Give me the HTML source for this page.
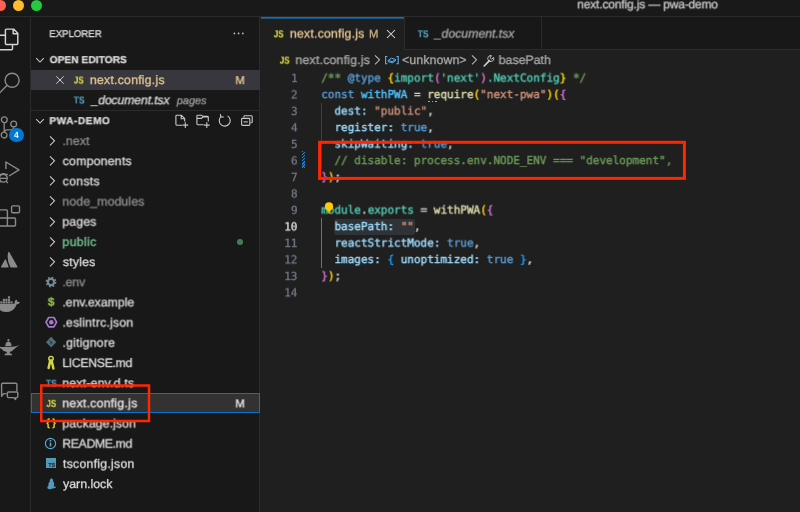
<!DOCTYPE html>
<html lang="en"><head><meta charset="utf-8"><title>next.config.js — pwa-demo</title>
<style>
*{box-sizing:border-box;margin:0;padding:0}
html,body{width:800px;height:512px;overflow:hidden;background:#1f1f1f}
body{position:relative;font-family:"Liberation Sans",sans-serif;color:#ccc;-webkit-font-smoothing:antialiased}
.abs{position:absolute}
.t{position:absolute;white-space:pre;line-height:1;transform-origin:0 0;will-change:transform;text-rendering:geometricPrecision}
#title{left:0;top:0;width:800px;height:17px;background:#191919;border-bottom:1px solid #2b2b2b}
#act{left:0;top:17px;width:31px;height:495px;background:#181818;border-right:1px solid #2b2b2b}
#side{left:31px;top:17px;width:229px;height:495px;background:#181818;border-right:1px solid #2b2b2b}
#tabs{left:260px;top:17px;width:540px;height:33px;background:#181818;border-bottom:1px solid #2b2b2b}
#tab1{left:260px;top:17px;width:145px;height:33px;background:#1f1f1f;border-right:1px solid #2b2b2b}
#tab1:before{content:'';position:absolute;left:1px;top:0;width:143px;height:1px;background:#0a74cc}
#tab1:after{content:'';position:absolute;left:1px;top:1px;width:143px;height:1px;background:#0a74cc;opacity:.6}
#tab2{left:405px;top:17px;width:137px;height:33px;background:#181818;border-right:1px solid #2b2b2b;border-bottom:1px solid #2b2b2b}
.mono{font-family:"Liberation Mono",monospace}
.code{-webkit-text-stroke:0.38px currentColor;text-rendering:geometricPrecision;will-change:transform;transform-origin:0 0;position:absolute;left:321px;white-space:pre;font-family:"DejaVu Sans Mono","Liberation Mono",monospace;font-size:11px;line-height:16.5px;height:16.5px;color:#d4d4d4;letter-spacing:0.0px}
.ln{-webkit-text-stroke:0.3px currentColor;text-rendering:geometricPrecision;will-change:transform;transform-origin:0 0;position:absolute;left:260px;width:37.5px;text-align:right;font-family:"DejaVu Sans Mono","Liberation Mono",monospace;font-size:11px;line-height:16.5px;height:16.5px;color:#6e7681}
.row{position:absolute;left:31px;width:229px;height:20.18px}
.lbl{position:absolute;white-space:pre;font-size:12px;line-height:20.18px;height:20.18px;top:0}
.c1{color:#6a9955}.kw{color:#569cd6}.v{color:#9cdcfe}.k{color:#4fc1ff}.f{color:#dcdcaa}.s{color:#ce9178}
.b1{color:#ffd700}.b2{color:#da70d6}.b3{color:#179fff}.ty{color:#4ec9b0}
.redbox{position:absolute;border:3px solid #ff2600}
</style></head>
<body>
<div class="abs" id="title"></div>
<div class="abs" id="act"></div>
<div class="abs" id="side"></div>
<div class="abs" id="tabs"></div>
<div class="abs" id="tab1"></div>
<div class="abs" id="tab2"></div>
<div class="abs" style="left:-5.5px;top:0px;width:11px;height:11px;border-radius:50%;background:#fe5f57"></div>
<div class="abs" style="left:12.7px;top:0px;width:11px;height:11px;border-radius:50%;background:#febc2e"></div>
<div class="abs" style="left:30.799999999999997px;top:0px;width:11px;height:11px;border-radius:50%;background:#28c840"></div>
<div class="t" style="transform:rotate(0.001deg) translate(0.32px,0.3px);left:577px;top:-3px;height:14px;line-height:14px;font-size:12px;color:#c8c8c8;letter-spacing:-0.165px;-webkit-text-stroke:0.3px currentColor">next.config.js — pwa-demo</div>
<div class="t" style="transform:rotate(0.001deg) translate(0.32px,0.0px);left:49px;top:28px;height:14px;line-height:14px;font-size:9.7px;color:#dadada;letter-spacing:-0.043px;-webkit-text-stroke:0.3px currentColor">EXPLORER</div>
<div class="t" style="transform:rotate(0.001deg) translate(0.7px,0.1px);left:49px;top:54px;height:14px;line-height:14px;font-size:10.1px;color:#dadada;letter-spacing:0.087px;font-weight:700;-webkit-text-stroke:0.3px currentColor">OPEN EDITORS</div>
<div class="t" style="transform:rotate(0.001deg) translate(0.44px,0.1px);left:49px;top:115px;height:14px;line-height:14px;font-size:10.1px;color:#dadada;letter-spacing:0.543px;font-weight:700;-webkit-text-stroke:0.3px currentColor">PWA-DEMO</div>
<div class="abs" style="left:31px;top:109.6px;width:229px;height:1px;background:#2b2b2b"></div>
<div class="abs" style="left:31px;top:70px;width:229px;height:20px;background:#37373d"></div>
<svg class="abs" style="left:34.3px;top:54px" width="12" height="12" viewBox="0 0 12 12"><path d="M2.2 4.2 L6 8 L9.8 4.2" fill="none" stroke="#ccc" stroke-width="1.05"/></svg>
<svg class="abs" style="left:34.3px;top:115px" width="12" height="12" viewBox="0 0 12 12"><path d="M2.2 4.2 L6 8 L9.8 4.2" fill="none" stroke="#ccc" stroke-width="1.05"/></svg>
<svg class="abs" style="left:54px;top:74px" width="12" height="12" viewBox="0 0 12 12"><path d="M2.3 2.3 L9.7 9.7 M9.7 2.3 L2.3 9.7" stroke="#ccc" stroke-width="1" fill="none"/></svg>
<div class="t" style="transform:rotate(0.001deg) translate(0.88px,0.48px) scale(0.8034,1);left:73px;top:75px;height:12px;line-height:12px;font-size:10px;color:#d4d444;font-weight:700;-webkit-text-stroke:0.2px currentColor">JS</div>
<div class="t" style="transform:rotate(0.001deg) translate(0.9px,0.0px);left:89px;top:72px;height:16px;line-height:16px;font-size:12.3px;color:#e6c592;letter-spacing:0.212px;-webkit-text-stroke:0.3px currentColor">next.config.js</div>
<div class="t" style="transform:rotate(0.001deg) translate(0.4px,0.0px);left:235px;top:73px;height:16px;line-height:16px;font-size:11.3px;color:#e6c592;letter-spacing:0.000px;-webkit-text-stroke:0.3px currentColor">M</div>
<div class="t" style="transform:rotate(0.001deg) translate(0.71px,0.48px) scale(0.8618,1);left:73px;top:95px;height:12px;line-height:12px;font-size:10px;color:#519aba;font-weight:700;-webkit-text-stroke:0.2px currentColor">TS</div>
<div class="t" style="transform:rotate(0.001deg) translate(0.48px,0.2px);left:91px;top:92px;height:16px;line-height:16px;font-size:12.3px;color:#dadada;letter-spacing:-0.150px;font-style:italic;-webkit-text-stroke:0.3px currentColor">_document.tsx</div>
<div class="t" style="transform:rotate(0.001deg) translate(0.77px,0.2px);left:176px;top:93px;height:16px;line-height:16px;font-size:10.9px;color:#9d9d9d;letter-spacing:0.036px;font-style:italic;-webkit-text-stroke:0.3px currentColor">pages</div>
<svg class="abs" style="left:46.4px;top:134.8px" width="12" height="12" viewBox="0 0 12 12"><path d="M4.0 1.3 L8.5 5.8 L4.0 10.3" fill="none" stroke="#c8c8c8" stroke-width="1.1"/></svg>
<div class="t" style="transform:rotate(0.001deg) translate(0.39px,0.95px);left:62px;top:132px;height:16px;line-height:16px;font-size:12.3px;color:#8c8c8c;letter-spacing:0.110px;-webkit-text-stroke:0.3px currentColor">.next</div>
<svg class="abs" style="left:46.4px;top:154.98000000000002px" width="12" height="12" viewBox="0 0 12 12"><path d="M4.0 1.3 L8.5 5.8 L4.0 10.3" fill="none" stroke="#c8c8c8" stroke-width="1.1"/></svg>
<div class="t" style="transform:rotate(0.001deg) translate(0.65px,0.13px);left:62px;top:153px;height:16px;line-height:16px;font-size:12.3px;color:#dadada;letter-spacing:0.217px;-webkit-text-stroke:0.3px currentColor">components</div>
<svg class="abs" style="left:46.4px;top:175.16000000000003px" width="12" height="12" viewBox="0 0 12 12"><path d="M4.0 1.3 L8.5 5.8 L4.0 10.3" fill="none" stroke="#c8c8c8" stroke-width="1.1"/></svg>
<div class="t" style="transform:rotate(0.001deg) translate(0.65px,0.31px);left:62px;top:173px;height:16px;line-height:16px;font-size:12.3px;color:#dadada;letter-spacing:0.287px;-webkit-text-stroke:0.3px currentColor">consts</div>
<svg class="abs" style="left:46.4px;top:195.34px" width="12" height="12" viewBox="0 0 12 12"><path d="M4.0 1.3 L8.5 5.8 L4.0 10.3" fill="none" stroke="#c8c8c8" stroke-width="1.1"/></svg>
<div class="t" style="transform:rotate(0.001deg) translate(0.4px,0.49px);left:62px;top:193px;height:16px;line-height:16px;font-size:12.3px;color:#8c8c8c;letter-spacing:0.122px;-webkit-text-stroke:0.3px currentColor">node_modules</div>
<svg class="abs" style="left:46.4px;top:215.52px" width="12" height="12" viewBox="0 0 12 12"><path d="M4.0 1.3 L8.5 5.8 L4.0 10.3" fill="none" stroke="#c8c8c8" stroke-width="1.1"/></svg>
<div class="t" style="transform:rotate(0.001deg) translate(0.4px,0.67px);left:62px;top:213px;height:16px;line-height:16px;font-size:12.3px;color:#dadada;letter-spacing:0.128px;-webkit-text-stroke:0.3px currentColor">pages</div>
<svg class="abs" style="left:46.4px;top:235.70000000000002px" width="12" height="12" viewBox="0 0 12 12"><path d="M4.0 1.3 L8.5 5.8 L4.0 10.3" fill="none" stroke="#c8c8c8" stroke-width="1.1"/></svg>
<div class="t" style="transform:rotate(0.001deg) translate(0.4px,0.85px);left:62px;top:233px;height:16px;line-height:16px;font-size:12.3px;color:#73c991;letter-spacing:0.348px;-webkit-text-stroke:0.3px currentColor">public</div>
<svg class="abs" style="left:46.4px;top:255.88px" width="12" height="12" viewBox="0 0 12 12"><path d="M4.0 1.3 L8.5 5.8 L4.0 10.3" fill="none" stroke="#c8c8c8" stroke-width="1.1"/></svg>
<div class="t" style="transform:rotate(0.001deg) translate(0.83px,0.03px);left:62px;top:254px;height:16px;line-height:16px;font-size:12.3px;color:#dadada;letter-spacing:0.195px;-webkit-text-stroke:0.3px currentColor">styles</div>
<svg class="abs" style="left:45px;top:275.86px" width="12" height="12" viewBox="0 0 12 12"><circle cx="6" cy="6" r="3.1" fill="none" stroke="#758a94" stroke-width="2.2"/><circle cx="6" cy="6" r="4.6" fill="none" stroke="#758a94" stroke-width="1.6" stroke-dasharray="1.8 1.81"/></svg>
<div class="t" style="transform:rotate(0.001deg) translate(0.39px,0.21px);left:62px;top:274px;height:16px;line-height:16px;font-size:12.3px;color:#8c8c8c;letter-spacing:-0.126px;-webkit-text-stroke:0.3px currentColor">.env</div>
<div class="t" style="transform:rotate(0.001deg) translate(0.82px,0.86px) scale(1.0000,1);left:47px;top:295px;height:12px;line-height:12px;font-size:12px;color:#98c443;font-weight:700;-webkit-text-stroke:0.2px currentColor">$</div>
<div class="t" style="transform:rotate(0.001deg) translate(0.39px,0.39px);left:62px;top:294px;height:16px;line-height:16px;font-size:12.3px;color:#dadada;letter-spacing:-0.046px;-webkit-text-stroke:0.3px currentColor">.env.example</div>
<svg class="abs" style="left:45px;top:316.02px" width="13" height="13" viewBox="0 0 13 13"><path d="M3.7 1.5 L8.9 1.5 L11.6 6.2 L8.9 10.9 L3.7 10.9 L1.0 6.2 Z" fill="none" stroke="#a878cc" stroke-width="1.7" stroke-linejoin="round"/><circle cx="6.3" cy="6.2" r="2.3" fill="#a878cc"/></svg>
<div class="t" style="transform:rotate(0.001deg) translate(0.39px,0.57px);left:62px;top:314px;height:16px;line-height:16px;font-size:12.3px;color:#dadada;letter-spacing:0.191px;-webkit-text-stroke:0.3px currentColor">.eslintrc.json</div>
<svg class="abs" style="left:45px;top:335.8px" width="13" height="13" viewBox="0 0 13 13"><rect x="2.4" y="2.4" width="7.4" height="7.4" rx="0.6" transform="rotate(45 6.1 6.1)" fill="#526d7a"/><path d="M4.6 4.4 L7.4 7.2 M6 5.8 L6 8.4" stroke="#20282c" stroke-width="0.9" fill="none"/></svg>
<div class="t" style="transform:rotate(0.001deg) translate(0.39px,0.75px);left:62px;top:334px;height:16px;line-height:16px;font-size:12.3px;color:#dadada;letter-spacing:0.216px;-webkit-text-stroke:0.3px currentColor">.gitignore</div>
<svg class="abs" style="left:45px;top:354.98px" width="13" height="16" viewBox="0 0 13 16"><circle cx="6" cy="3.6" r="2.2" fill="none" stroke="#d4d43c" stroke-width="1.5"/><path d="M5.2 5.4 L3.6 13 M6.6 5.4 L8.4 13.4" stroke="#d4d43c" stroke-width="2.5" stroke-linecap="round" fill="none"/><path d="M5 8 L7 8" stroke="#d4d43c" stroke-width="2.4"/></svg>
<div class="t" style="transform:rotate(0.001deg) translate(0.32px,0.93px);left:62px;top:354px;height:16px;line-height:16px;font-size:12.3px;color:#dadada;letter-spacing:-0.338px;-webkit-text-stroke:0.3px currentColor">LICENSE.md</div>
<div class="t" style="transform:rotate(0.001deg) translate(0.91px,0.64px) scale(0.8618,1);left:45px;top:378px;height:12px;line-height:12px;font-size:10px;color:#519aba;font-weight:700;-webkit-text-stroke:0.2px currentColor">TS</div>
<div class="t" style="transform:rotate(0.001deg) translate(0.4px,0.11px);left:62px;top:375px;height:16px;line-height:16px;font-size:12.3px;color:#dadada;letter-spacing:0.178px;-webkit-text-stroke:0.3px currentColor">next-env.d.ts</div>
<div class="abs" style="left:31px;top:392.94px;width:229px;height:20.4px;background:#323232;border:1px solid #0a70c8"></div>
<div class="t" style="transform:rotate(0.001deg) translate(0.4px,0.29px);left:235px;top:396px;height:16px;line-height:16px;font-size:11.3px;color:#e4e4e4;letter-spacing:0.000px;-webkit-text-stroke:0.3px currentColor">M</div>
<div class="t" style="transform:rotate(0.001deg) translate(0.48px,0.82px) scale(0.8034,1);left:46px;top:398px;height:12px;line-height:12px;font-size:10px;color:#d4d444;font-weight:700;-webkit-text-stroke:0.2px currentColor">JS</div>
<div class="t" style="transform:rotate(0.001deg) translate(0.4px,0.29px);left:62px;top:395px;height:16px;line-height:16px;font-size:12.3px;color:#e4e4e4;letter-spacing:0.235px;-webkit-text-stroke:0.3px currentColor">next.config.js</div>
<div class="t" style="transform:rotate(0.001deg) translate(0.37px,0.95px) scale(0.8548,1);left:46px;top:416px;height:12px;line-height:12px;font-size:10.5px;color:#d4d444;font-weight:700;-webkit-text-stroke:0.2px currentColor">{ }</div>
<div class="t" style="transform:rotate(0.001deg) translate(0.4px,0.47px);left:62px;top:415px;height:16px;line-height:16px;font-size:12.3px;color:#dadada;letter-spacing:0.105px;-webkit-text-stroke:0.3px currentColor">package.json</div>
<svg class="abs" style="left:44.4px;top:436.8px" width="13" height="13" viewBox="0 0 13 13"><circle cx="6.5" cy="6.5" r="5.1" fill="none" stroke="#5aa6c8" stroke-width="1.15"/><path d="M6.5 5.6 L6.5 9.4" stroke="#5aa6c8" stroke-width="1.6"/><circle cx="6.5" cy="3.8" r="0.95" fill="#5aa6c8"/></svg>
<div class="t" style="transform:rotate(0.001deg) translate(0.32px,0.65px);left:62px;top:435px;height:16px;line-height:16px;font-size:12.3px;color:#dadada;letter-spacing:-0.380px;-webkit-text-stroke:0.3px currentColor">README.md</div>
<div class="abs" style="left:46.2px;top:457.98px;width:9.8px;height:9.8px;background:#519aba"></div>
<div class="t" style="transform:rotate(0.001deg) translate(0.35px,0.96px) scale(0.9251,1);left:48px;top:459px;height:12px;line-height:12px;font-size:5.8px;color:#1b2b34;font-weight:700;-webkit-text-stroke:0.2px currentColor">TS</div>
<div class="t" style="transform:rotate(0.001deg) translate(0.92px,0.83px);left:62px;top:455px;height:16px;line-height:16px;font-size:12.3px;color:#dadada;letter-spacing:0.258px;-webkit-text-stroke:0.3px currentColor">tsconfig.json</div>
<svg class="abs" style="left:45px;top:476.86px" width="13" height="14" viewBox="0 0 13 14"><path d="M6.2 1.6 C7.4 1.2 8.4 2.6 8 4.2 C9.6 5.6 9.4 8.2 8.6 9.4 L10.6 9.4 L10.6 11 L7.6 11.6 C6 12.6 3.4 12.4 2.6 11.6 C1.8 10.4 2.8 9 3.6 8.6 C3 7 3.8 5.4 4.8 4.6 C4.4 3.2 5.2 1.8 6.2 1.6 Z" fill="#519aba"/></svg>
<div class="t" style="transform:rotate(0.001deg) translate(0.04px,0.01px);left:63px;top:476px;height:16px;line-height:16px;font-size:12.3px;color:#dadada;letter-spacing:0.020px;-webkit-text-stroke:0.3px currentColor">yarn.lock</div>
<div class="abs" style="left:237.3px;top:239.20000000000002px;width:5.6px;height:5.6px;border-radius:50%;background:#457b58"></div>
<div class="t" style="transform:rotate(0.001deg) translate(0.78px,0.28px) scale(0.8034,1);left:273px;top:29px;height:12px;line-height:12px;font-size:10px;color:#d4d444;font-weight:700;-webkit-text-stroke:0.2px currentColor">JS</div>
<div class="t" style="transform:rotate(0.001deg) translate(0.9px,0.6px);left:289px;top:25px;height:16px;line-height:16px;font-size:12.3px;color:#e6c592;letter-spacing:0.197px;-webkit-text-stroke:0.3px currentColor">next.config.js</div>
<div class="t" style="transform:rotate(0.001deg) translate(0.0px,0.6px);left:369px;top:26px;height:16px;line-height:16px;font-size:11.3px;color:#c9ad80;letter-spacing:0.000px;-webkit-text-stroke:0.3px currentColor">M</div>
<svg class="abs" style="left:385px;top:28px" width="12" height="12" viewBox="0 0 12 12"><path d="M2 2 L10 10 M10 2 L2 10" stroke="#ddd" stroke-width="1.05" fill="none"/></svg>
<div class="t" style="transform:rotate(0.001deg) translate(0.71px,0.28px) scale(0.8618,1);left:417px;top:29px;height:12px;line-height:12px;font-size:10px;color:#519aba;font-weight:700;-webkit-text-stroke:0.2px currentColor">TS</div>
<div class="t" style="transform:rotate(0.001deg) translate(0.68px,0.6px);left:434px;top:25px;height:16px;line-height:16px;font-size:12.3px;color:#a6a6a6;letter-spacing:-0.017px;font-style:italic;-webkit-text-stroke:0.3px currentColor">_document.tsx</div>
<div class="t" style="transform:rotate(0.001deg) translate(0.78px,0.58px) scale(0.8034,1);left:279px;top:55px;height:12px;line-height:12px;font-size:10px;color:#d4d444;font-weight:700;-webkit-text-stroke:0.2px currentColor">JS</div>
<div class="t" style="transform:rotate(0.001deg) translate(0.5px,0.0px);left:295px;top:52px;height:16px;line-height:16px;font-size:12.3px;color:#a9a9a9;letter-spacing:0.205px;-webkit-text-stroke:0.3px currentColor">next.config.js</div>
<svg class="abs" style="left:371.4px;top:53.7px" width="12" height="12" viewBox="0 0 12 12"><path d="M4.0 1.3 L8.5 5.8 L4.0 10.3" fill="none" stroke="#b4b4b4" stroke-width="1.1"/></svg>
<svg class="abs" style="left:380px;top:50px" width="24" height="20" viewBox="380 50 24 20"><path d="M387.4 56.5 L385.6 56.5 L385.6 63.8 L387.4 63.8 M396.4 56.5 L398.2 56.5 L398.2 63.8 L396.4 63.8" fill="none" stroke="#5eaef0" stroke-width="1.1"/><path d="M388.2 60.4 L391.3 58.2 L395.6 59.4 L395.6 60.6 L392.4 62.8 L388.2 61.6 Z M388.4 60.5 L392.4 61.6 L395.4 59.6 M392.4 61.6 L392.4 62.6" fill="none" stroke="#5eaef0" stroke-width="1"/></svg>
<div class="t" style="transform:rotate(0.001deg) translate(0.08px,0.0px);left:402px;top:52px;height:16px;line-height:16px;font-size:12.3px;color:#a9a9a9;letter-spacing:0.117px;-webkit-text-stroke:0.3px currentColor">&lt;unknown&gt;</div>
<svg class="abs" style="left:468.3px;top:53.7px" width="12" height="12" viewBox="0 0 12 12"><path d="M4.0 1.3 L8.5 5.8 L4.0 10.3" fill="none" stroke="#b4b4b4" stroke-width="1.1"/></svg>
<svg class="abs" style="left:481.5px;top:53.5px" width="14" height="14" viewBox="0 0 14 14"><path d="M2.2 12 L7.4 6.6" stroke="#ccc" stroke-width="1.7" stroke-linecap="round" fill="none"/><path d="M11.6 3.4 A3 3 0 1 1 9.4 1.6 L8.2 3.8 L9.6 5.2 Z" fill="none" stroke="#ccc" stroke-width="1"/></svg>
<div class="t" style="transform:rotate(0.001deg) translate(0.7px,0.0px);left:498px;top:52px;height:16px;line-height:16px;font-size:12.3px;color:#a9a9a9;letter-spacing:0.019px;-webkit-text-stroke:0.3px currentColor">basePath</div>
<div class="abs" style="left:333.5px;top:218.60000000000002px;width:81px;height:16px;background:#2f3236;border-radius:2px"></div>
<div class="abs" style="left:321.3px;top:102.8px;width:1px;height:66.0px;background:#404040"></div>
<div class="abs" style="left:321.3px;top:218.3px;width:1px;height:49.5px;background:#707070"></div>
<div class="ln" style="transform:rotate(0.001deg) translate(0.0px,0.9px);left:260px;top:70px;color:#6e7681">1</div>
<div class="code" style="transform:rotate(0.001deg) translate(0.3px,0.55px);left:321px;top:70px"><span class="c1">/** </span><span class="kw">@type</span><span class="c1"> </span><span class="b1">{</span><span class="ty">import</span><span class="b2">(</span><span class="ty">'next'</span><span class="b2">)</span><span class="ty">.NextConfig</span><span class="b1">}</span><span class="c1"> */</span></div>
<div class="ln" style="transform:rotate(0.001deg) translate(0.0px,0.4px);left:260px;top:87px;color:#6e7681">2</div>
<div class="code" style="transform:rotate(0.001deg) translate(0.3px,0.05px);left:321px;top:87px"><span class="kw">const</span> <span class="k">withPWA</span> = <span class="f">require</span><span class="b1">(</span><span class="s">"next-pwa"</span><span class="b1">)(</span><span class="b2">{</span></div>
<div class="ln" style="transform:rotate(0.001deg) translate(0.0px,0.9px);left:260px;top:103px;color:#6e7681">3</div>
<div class="code" style="transform:rotate(0.001deg) translate(0.3px,0.55px);left:321px;top:103px">  <span class="v">dest</span><span class="v">:</span> <span class="s">"public"</span>,</div>
<div class="ln" style="transform:rotate(0.001deg) translate(0.0px,0.4px);left:260px;top:120px;color:#6e7681">4</div>
<div class="code" style="transform:rotate(0.001deg) translate(0.3px,0.05px);left:321px;top:120px">  <span class="v">register</span><span class="v">:</span> <span class="kw">true</span>,</div>
<div class="ln" style="transform:rotate(0.001deg) translate(0.0px,0.9px);left:260px;top:136px;color:#6e7681">5</div>
<div class="code" style="transform:rotate(0.001deg) translate(0.3px,0.55px);left:321px;top:136px">  <span class="v">skipWaiting</span><span class="v">:</span> <span class="kw">true</span>,</div>
<div class="ln" style="transform:rotate(0.001deg) translate(0.0px,0.4px);left:260px;top:153px;color:#6e7681">6</div>
<div class="code" style="transform:rotate(0.001deg) translate(0.3px,0.05px);left:321px;top:153px">  <span class="c1">// disable: process.env.NODE_ENV === "development",</span></div>
<div class="ln" style="transform:rotate(0.001deg) translate(0.0px,0.9px);left:260px;top:169px;color:#6e7681">7</div>
<div class="code" style="transform:rotate(0.001deg) translate(0.3px,0.55px);left:321px;top:169px"><span class="b2">}</span><span class="b1">)</span>;</div>
<div class="ln" style="transform:rotate(0.001deg) translate(0.0px,0.4px);left:260px;top:186px;color:#6e7681">8</div>
<div class="ln" style="transform:rotate(0.001deg) translate(0.0px,0.9px);left:260px;top:202px;color:#6e7681">9</div>
<div class="code" style="transform:rotate(0.001deg) translate(0.3px,0.55px);left:321px;top:202px"><span class="ty">module</span>.<span class="ty">exports</span> = <span class="f">withPWA</span><span class="b1">(</span><span class="b2">{</span></div>
<div class="ln" style="transform:rotate(0.001deg) translate(0.0px,0.4px);left:260px;top:219px;color:#dcdcdc">10</div>
<div class="code" style="transform:rotate(0.001deg) translate(0.3px,0.05px);left:321px;top:219px">  <span class="v">basePath</span><span class="v">:</span> <span class="s">""</span>,</div>
<div class="ln" style="transform:rotate(0.001deg) translate(0.0px,0.9px);left:260px;top:235px;color:#6e7681">11</div>
<div class="code" style="transform:rotate(0.001deg) translate(0.3px,0.55px);left:321px;top:235px">  <span class="v">reactStrictMode</span><span class="v">:</span> <span class="kw">true</span>,</div>
<div class="ln" style="transform:rotate(0.001deg) translate(0.0px,0.4px);left:260px;top:252px;color:#6e7681">12</div>
<div class="code" style="transform:rotate(0.001deg) translate(0.3px,0.05px);left:321px;top:252px">  <span class="v">images</span><span class="v">:</span> <span class="b3">{</span> <span class="v">unoptimized</span><span class="v">:</span> <span class="kw">true</span> <span class="b3">}</span>,</div>
<div class="ln" style="transform:rotate(0.001deg) translate(0.0px,0.9px);left:260px;top:268px;color:#6e7681">13</div>
<div class="code" style="transform:rotate(0.001deg) translate(0.3px,0.55px);left:321px;top:268px"><span class="b2">}</span><span class="b1">)</span>;</div>
<div class="ln" style="transform:rotate(0.001deg) translate(0.0px,0.4px);left:260px;top:285px;color:#6e7681">14</div>
<div class="abs" style="left:301.6px;top:151.3px;width:3.6px;height:16.5px;background:repeating-linear-gradient(135deg,#1b81d8 0 1.1px,#1f2a33 1.1px 2.2px)"></div>
<div class="abs" style="left:428px;top:100.89999999999999px;width:11px;height:1px;background:repeating-linear-gradient(90deg,#aaa 0 1.6px,transparent 1.6px 3.6px)"></div>
<svg class="abs" style="left:322.8px;top:201.20000000000002px" width="12" height="14" viewBox="0 0 12 14"><circle cx="6" cy="5.4" r="4.1" fill="#ffcc00"/><rect x="4.4" y="8.6" width="3.2" height="2" fill="#ffcc00"/><rect x="4.6" y="11.2" width="2.8" height="1.2" fill="#e0b400"/></svg>
<svg class="abs" style="left:0;top:0" width="800" height="512" viewBox="0 0 800 512"><rect x="319.6" y="142.3" width="364.8" height="36.1" fill="none" stroke="#ff2600" stroke-width="3"/><rect x="41.25" y="385.5" width="107.75" height="35.5" fill="none" stroke="#ff2600" stroke-width="2.5"/></svg>
<svg class="abs" style="left:0;top:0" width="31" height="512" viewBox="0 0 31 512"><path d="M6.4 29.1 L13.6 29.1 L17.8 33.3 L17.8 43.4 Q17.8 44.4 16.8 44.4 L6.4 44.4 Q5.4 44.4 5.4 43.4 L5.4 30.1 Q5.4 29.1 6.4 29.1 Z M13.2 29.3 L13.2 33.7 L17.6 33.7" fill="none" stroke="#d4d4d4" stroke-width="1.45" stroke-linejoin="round"/><path d="M5.4 35.3 L-2 35.3 M-2 49.7 L11.5 49.7 Q12.5 49.7 12.5 48.7 L12.5 44.4" fill="none" stroke="#d4d4d4" stroke-width="1.45"/><circle cx="12.1" cy="80.3" r="7" fill="none" stroke="#8a8a8a" stroke-width="1.4"/><path d="M7.2 85.3 L-1.5 94" stroke="#8a8a8a" stroke-width="1.4" fill="none"/><circle cx="4.3" cy="119.7" r="2.9" fill="none" stroke="#8a8a8a" stroke-width="1.3"/><circle cx="4.1" cy="135.1" r="2.9" fill="none" stroke="#8a8a8a" stroke-width="1.3"/><circle cx="13.7" cy="124" r="2.9" fill="none" stroke="#8a8a8a" stroke-width="1.3"/><path d="M4.2 122.6 L4.2 132.2 M13.7 126.9 Q13.7 129.9 10.5 129.9 L7.5 129.9 Q4.4 129.9 4.2 132.2" fill="none" stroke="#8a8a8a" stroke-width="1.3"/><path d="M5.9 169 L5.9 162 L19 169.8 L9 176" fill="none" stroke="#8a8a8a" stroke-width="1.4" stroke-linejoin="round"/><circle cx="3.4" cy="178.3" r="3.9" fill="none" stroke="#8a8a8a" stroke-width="1.3"/><path d="M-1 174 L1 175.6 M7.8 174 L5.8 175.6 M-1 183 L1 181 M7.8 183 L5.8 181 M0.5 174.6 Q3.4 172.6 6.3 174.6 M-0.5 178.3 L7.3 178.3" stroke="#8a8a8a" stroke-width="1.2" fill="none"/><rect x="11.6" y="205.9" width="7.9" height="6.9" rx="1.2" fill="none" stroke="#8a8a8a" stroke-width="1.4"/><path d="M-2 209.9 L6.4 209.9 Q7.4 209.9 7.4 210.9 L7.4 226 M-2 218 L14.5 218 Q15.5 218 15.5 219 L15.5 225 Q15.5 226 14.5 226 L-2 226" fill="none" stroke="#8a8a8a" stroke-width="1.4"/><path d="M8.2 252.2 Q8.8 251.2 9.4 252.2 L17.4 266.6 Q17.8 267.5 16.9 267.5 L11.2 267.5 Q10.6 267.5 10.3 266.9 Q6.4 259.4 8.2 252.2 Z" fill="#8a8a8a"/><path d="M5.0 259.6 Q5.5 258.8 6.0 259.8 L8.6 266.7 Q8.9 267.5 8.1 267.5 L1.5 267.5 Q0.6 267.5 1.0 266.7 Z" fill="#8a8a8a"/><path d="M-1 303.7 L14.4 303.7 Q14.6 300.4 16.2 299.4 Q17.5 300.4 17.5 302 Q18.8 301.5 20 302.3 Q19.2 304.2 16.6 304.4 Q14.2 312 5.5 312 Q0.5 312 -1 308.5 Z" fill="#8a8a8a"/><rect x="0.3" y="301.3" width="2.1" height="2.1" fill="#8a8a8a"/><rect x="2.85" y="301.3" width="2.1" height="2.1" fill="#8a8a8a"/><rect x="5.4" y="301.3" width="2.1" height="2.1" fill="#8a8a8a"/><rect x="7.95" y="301.3" width="2.1" height="2.1" fill="#8a8a8a"/><rect x="10.5" y="301.3" width="2.1" height="2.1" fill="#8a8a8a"/><rect x="2.85" y="298.8" width="2.1" height="2.1" fill="#8a8a8a"/><rect x="5.4" y="298.8" width="2.1" height="2.1" fill="#8a8a8a"/><rect x="7.95" y="298.8" width="2.1" height="2.1" fill="#8a8a8a"/><rect x="7.95" y="296.3" width="2.1" height="2.1" fill="#8a8a8a"/><circle cx="8.4" cy="340.2" r="1.1" fill="#8a8a8a"/><path d="M5.2 346 Q5.4 342 8.4 341.6 Q11.4 342 11.6 346 Z" fill="#8a8a8a"/><path d="M-1 346.6 Q3 347.2 6 346.8 L12.6 346.8 Q16 346.6 19.6 345 Q16 347.4 14 349.2 Q12.2 351.4 9.8 352 L9.8 353.2 Q12 353.4 12.4 355.2 L4.3 355.2 Q4.7 353.4 6.9 353.2 L6.9 352 Q3 351.4 1.2 348.4 Q0 348.2 -1 347.8 Z" fill="#8a8a8a"/><path d="M6.5 393.6 L3.6 393.6 L1.6 396.2 L1.6 384.3 Q1.6 383.3 2.6 383.3 L15.9 383.3 Q16.9 383.3 16.9 384.3 L16.9 391.2" fill="none" stroke="#8a8a8a" stroke-width="1.4" stroke-linejoin="round"/><path d="M8.4 392 L16.8 392 Q17.8 392 17.8 393 L17.8 396.6 Q17.8 397.6 16.8 397.6 L15.6 397.6 L15.6 399.6 L13.4 397.6 L8.4 397.6 Q7.4 397.6 7.4 396.6 L7.4 393 Q7.4 392 8.4 392 Z" fill="none" stroke="#8a8a8a" stroke-width="1.4" stroke-linejoin="round"/></svg>
<div class="abs" style="left:8.9px;top:127.7px;width:14.8px;height:14.8px;border-radius:50%;background:#0078d4"></div>
<div class="t" style="transform:rotate(0.001deg) translate(0.97px,0.9px);left:13px;top:129px;height:10px;line-height:10px;font-size:8.6px;color:#fff;letter-spacing:0.000px;font-weight:700">4</div>
<svg class="abs" style="left:0;top:0" width="260" height="140" viewBox="0 0 260 140"><circle cx="234.4" cy="33.4" r="0.85" fill="#c8c8c8"/><circle cx="238.6" cy="33.4" r="0.85" fill="#c8c8c8"/><circle cx="242.8" cy="33.4" r="0.85" fill="#c8c8c8"/><path d="M182 125.2 L176.8 125.2 Q175.9 125.2 175.9 124.3 L175.9 116.1 Q175.9 115.2 176.8 115.2 L181.4 115.2 L184.7 118.5 L184.7 121.4 M181.2 115.3 L181.2 118.7 L184.6 118.7" fill="none" stroke="#c8c8c8" stroke-width="1.1"/><path d="M185.3 122.2 L185.3 128 M182.4 125.1 L188.2 125.1" stroke="#c8c8c8" stroke-width="1.1" fill="none"/><path d="M203.6 124.7 L197.8 124.7 Q196.9 124.7 196.9 123.8 L196.9 116.1 Q196.9 115.2 197.8 115.2 L201.6 115.2 L202.8 116.4 L207.4 116.4 Q208.3 116.4 208.3 117.3 L208.3 121.4 M196.9 118.4 L201.4 118.4 L202.8 117 L208 117" fill="none" stroke="#c8c8c8" stroke-width="1.1"/><path d="M206.8 122.2 L206.8 128 M203.9 125.1 L209.7 125.1" stroke="#c8c8c8" stroke-width="1.1" fill="none"/><path d="M227.6 115.9 A5.5 5.5 0 1 1 221.2 116.4" fill="none" stroke="#c8c8c8" stroke-width="1.1"/><path d="M220.4 114.2 L220.9 117 L223.8 117" fill="none" stroke="#c8c8c8" stroke-width="1.1"/><path d="M243.9 117.6 L243.9 116.7 Q243.9 115.8 244.8 115.8 L251.3 115.8 Q252.2 115.8 252.2 116.7 L252.2 121.9 Q252.2 122.8 251.3 122.8 L250.4 122.8" fill="none" stroke="#c8c8c8" stroke-width="1.1"/><rect x="241.6" y="118.4" width="8.2" height="7" rx="0.9" fill="none" stroke="#c8c8c8" stroke-width="1.1"/><path d="M243.6 121.9 L247.8 121.9" stroke="#c8c8c8" stroke-width="1.1"/></svg>
</body></html>
